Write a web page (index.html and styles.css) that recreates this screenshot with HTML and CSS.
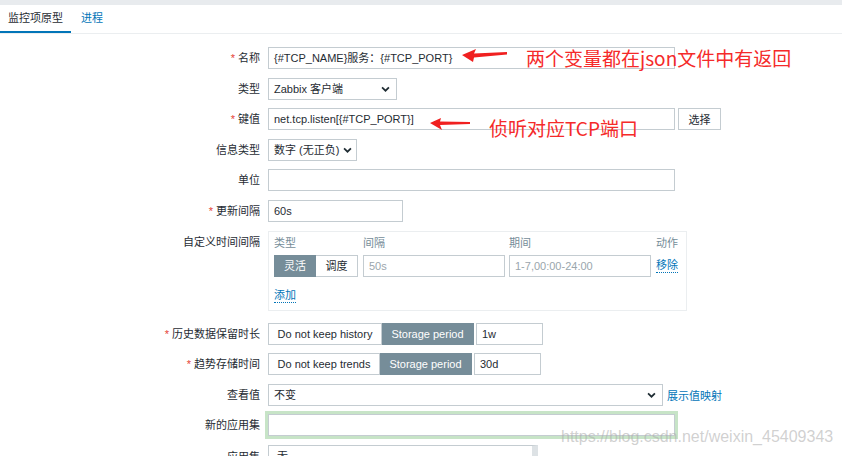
FILE: index.html
```html
<!DOCTYPE html>
<html lang="zh">
<head>
<meta charset="utf-8">
<title>监控项原型</title>
<link rel="stylesheet" href="styles.css">
</head>
<body>
<div class="topbar"></div>
<div class="tabs">
  <span class="tab active">监控项原型</span>
  <span class="tab link">进程</span>
</div>

<div class="form">
  <div class="row">
    <label class="lbl"><span class="req">*</span> 名称</label>
    <div class="field"><div class="input w-full">{#TCP_NAME}服务：{#TCP_PORT}</div></div>
  </div>
  <div class="row">
    <label class="lbl">类型</label>
    <div class="field"><div class="select w-type"><span>Zabbix 客户端</span><svg class="chev" width="9" height="6" viewBox="0 0 10 7"><polyline points="1,1.5 5,5.5 9,1.5" fill="none" stroke="#1f2c33" stroke-width="2"/></svg></div></div>
  </div>
  <div class="row">
    <label class="lbl"><span class="req">*</span> 键值</label>
    <div class="field"><div class="input w-full">net.tcp.listen[{#TCP_PORT}]</div><button class="btn">选择</button></div>
  </div>
  <div class="row">
    <label class="lbl">信息类型</label>
    <div class="field"><div class="select w-info"><span>数字 (无正负)</span><svg class="chev" width="9" height="6" viewBox="0 0 10 7"><polyline points="1,1.5 5,5.5 9,1.5" fill="none" stroke="#1f2c33" stroke-width="2"/></svg></div></div>
  </div>
  <div class="row">
    <label class="lbl">单位</label>
    <div class="field"><div class="input w-full"></div></div>
  </div>
  <div class="row">
    <label class="lbl"><span class="req">*</span> 更新间隔</label>
    <div class="field"><div class="input w-upd">60s</div></div>
  </div>
  <div class="row row-top">
    <label class="lbl">自定义时间间隔</label>
    <div class="field">
      <div class="intervals">
        <div class="iv-grid">
          <span class="iv-h">类型</span>
          <span class="iv-h">间隔</span>
          <span class="iv-h">期间</span>
          <span class="iv-h">动作</span>
          <div class="seg seg-sm"><span class="on">灵活</span><span>调度</span></div>
          <div class="input iv-in ph">50s</div>
          <div class="input iv-in ph">1-7,00:00-24:00</div>
          <span class="dlink">移除</span>
        </div>
        <span class="dlink add">添加</span>
      </div>
    </div>
  </div>
  <div class="row mt">
    <label class="lbl"><span class="req">*</span> 历史数据保留时长</label>
    <div class="field"><div class="seg"><span class="s1">Do not keep history</span><span class="on s2">Storage period</span></div><div class="input w-small">1w</div></div>
  </div>
  <div class="row">
    <label class="lbl"><span class="req">*</span> 趋势存储时间</label>
    <div class="field"><div class="seg"><span class="s1b">Do not keep trends</span><span class="on s2">Storage period</span></div><div class="input w-small">30d</div></div>
  </div>
  <div class="row">
    <label class="lbl">查看值</label>
    <div class="field"><div class="select w-view"><span>不变</span><svg class="chev" width="9" height="6" viewBox="0 0 10 7"><polyline points="1,1.5 5,5.5 9,1.5" fill="none" stroke="#1f2c33" stroke-width="2"/></svg></div><span class="blink">展示值映射</span></div>
  </div>
  <div class="row">
    <label class="lbl">新的应用集</label>
    <div class="field"><div class="input w-full focus"></div></div>
  </div>
  <div class="row">
    <label class="lbl">应用集</label>
    <div class="field"><div class="listbox">无</div></div>
  </div>
</div>

<svg class="arrow a1" width="50" height="16" viewBox="0 0 50 16"><polygon points="2,9 16,3 14,7.5 47,6 47,8.5 14,11.5 13,16" fill="#f02020"/></svg>
<div class="note n1">两个变量都在json文件中有返回</div>
<svg class="arrow a2" width="44" height="16" viewBox="0 0 44 16"><polygon points="1,8 12,3 11,6.5 41,7 41,9 11,10 13,15" fill="#f02020"/></svg>
<div class="note n2">侦听对应TCP端口</div>
<div class="watermark">https://blog.csdn.net/weixin_45409343</div>
</body>
</html>
```

FILE: styles.css
```css
* { box-sizing: border-box; }
body {
  margin: 0;
  width: 842px;
  height: 456px;
  overflow: hidden;
  position: relative;
  background: #fff;
  color: #1f2c33;
  font-family: "Liberation Sans", "Noto Sans CJK SC", sans-serif;
  font-size: 11px;
}
.topbar { height: 5px; background: #e8ebee; }
.tabs {
  display: flex;
  height: 29px;
  border-bottom: 1px solid #ebeef0;
}
.tab {
  padding: 0 8px;
  line-height: 26px;
  height: 28px;
  white-space: nowrap;
}
.tab.active { border-bottom: 2px solid #0275b8; }
.tab.link { color: #0275b8; padding-left: 10px; }

.form {
  padding-top: 13px;
  display: flex;
  flex-direction: column;
  gap: 8.6px;
}
.row {
  display: grid;
  grid-template-columns: 260px 1fr;
  column-gap: 8px;
  align-items: center;
}
.row.mt { margin-top: 3.4px; }
.row-top { align-items: start; }
.row-top .lbl { padding-top: 4px; }
.lbl { text-align: right; line-height: 14px; white-space: nowrap; }
.req { color: #e54335; }
.field { display: flex; align-items: center; gap: 3px; }

.input, .select, .listbox {
  height: 22px;
  border: 1px solid #c4ccd1;
  background: #fff;
  padding: 0 5px;
  line-height: 20px;
  white-space: nowrap;
  overflow: hidden;
}
.w-full { width: 407px; }
.w-type { width: 129px; }
.w-info { width: 89px; }
.w-upd { width: 135px; }
.w-view { width: 395px; }
.w-small { width: 67px; margin-left: -1px; }
.select { display: flex; align-items: center; justify-content: space-between; gap: 4px; padding-right: 6px; }
.chev { flex: none; }
.btn {
  height: 22px;
  width: 43px;
  border: 1px solid #c4ccd1;
  background: #fff;
  color: #1f2c33;
  font: inherit;
  padding: 0;
}
.focus { box-shadow: 0 0 0 3px #c7e4c7; }
.listbox { width: 270px; height: 24px; padding-left: 8px; border-right: 6px solid #dde2e5; }

.intervals {
  width: 419px;
  height: 80px;
  border: 1px solid #ebeef0;
  padding: 5px 0 0 5px;
}
.iv-grid {
  display: grid;
  grid-template-columns: 89px 146px 147px auto;
  row-gap: 5px;
  align-items: center;
}
.iv-h { color: #768d99; line-height: 13px; }
.iv-in { width: 142px; height: 22px; }
.ph { color: #9aa6ad; }
.dlink {
  color: #0275b8;
  border-bottom: 1px dotted #0275b8;
  line-height: 13px;
  justify-self: start;
}
.add { display: inline-block; margin-top: 12px; }

.seg { display: flex; height: 22px; }
.seg span {
  border: 1px solid #c4ccd1;
  background: #fff;
  line-height: 20px;
  text-align: center;
  white-space: nowrap;
}
.seg span + span { border-left: 0; }
.seg .on { background: #768d99; border-color: #768d99; color: #fff; }
.seg-sm span { width: 42px; }
.s1 { width: 114px; }
.s1b { width: 112px; }
.s2 { width: 92px; }
.blink { color: #0275b8; margin-left: 1px; }

.arrow { position: absolute; }
.a1 { left: 460px; top: 46px; }
.a2 { left: 429px; top: 115px; }
.note {
  position: absolute;
  color: #f52a2a;
  font-family: "Noto Sans CJK SC", sans-serif;
  font-size: 19px;
  line-height: 20px;
  white-space: nowrap;
}
.n1 { left: 526px; top: 48px; }
.n2 { left: 489px; top: 118px; }
.watermark {
  position: absolute;
  left: 561px;
  top: 428px;
  font-family: "Liberation Sans", sans-serif;
  font-size: 16px;
  line-height: 18px;
  color: rgba(170, 170, 170, 0.55);
  white-space: nowrap;
}
```
